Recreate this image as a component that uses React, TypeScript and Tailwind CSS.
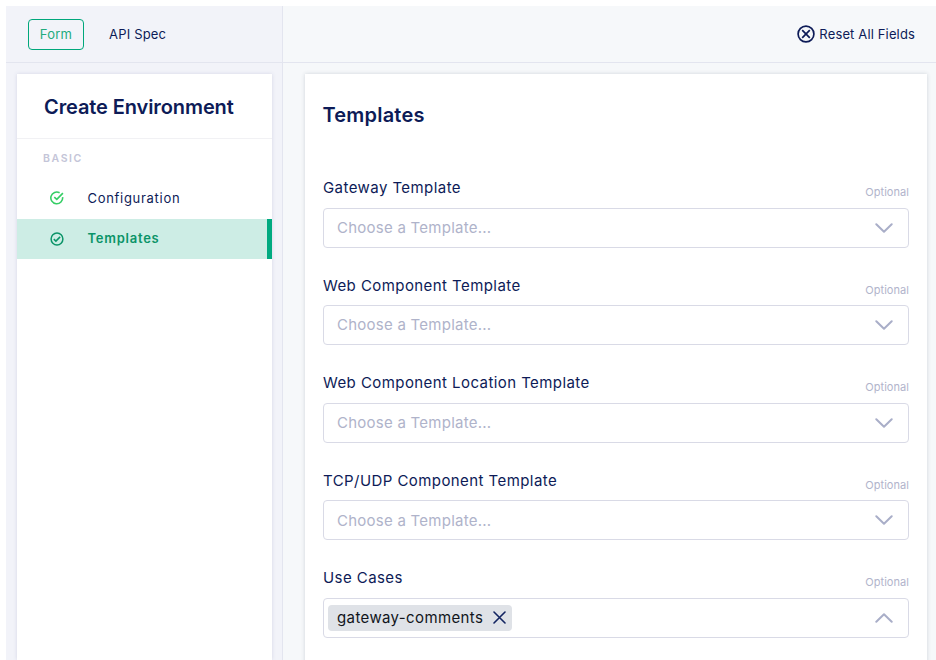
import React from "react";

const templateFields = [
  "Gateway Template",
  "Web Component Template",
  "Web Component Location Template",
  "TCP/UDP Component Template",
];

function Chevron({ up = false }: { up?: boolean }) {
  return (
    <svg width="18" height="10" viewBox="0 0 18 10" fill="none" stroke="#a9aec8" strokeWidth="2" strokeLinecap="round" strokeLinejoin="round">
      <path d={up ? "M1.3 8.7 9 1.3l7.7 7.4" : "M1.3 1.3 9 8.7l7.7-7.4"} />
    </svg>
  );
}

function Field({ label, up, children }: { label: string; up?: boolean; children: React.ReactNode }) {
  return (
    <div className="h-[97.6px] shrink-0">
      <div className="flex h-[31.5px] justify-between">
        <span className="text-[15px] leading-[24px] tracking-[0.43px]">{label}</span>
        <span className="pt-[7px] text-[11px] leading-[18px] tracking-[0.05px] text-[#b1b4cb]">Optional</span>
      </div>
      <div className="flex h-[40px] items-center justify-between rounded-[4px] border border-[#d9dae6] pr-[15px]">
        {children}
        <Chevron up={up} />
      </div>
    </div>
  );
}

export default function App() {
  return (
    <div className="flex h-[660px] w-[936px] overflow-hidden bg-white pl-1.5 pt-1.5 font-['Inter',sans-serif] text-[#0d1b57]">
      <aside className="flex w-[277px] shrink-0 flex-col border-r border-[#e3e5ef] bg-[#f2f3f9]">
        <div className="flex h-[57px] shrink-0 items-center border-b border-[#e3e5ef] pl-[22px] text-[13px]">
          <div className="flex h-[31px] w-[56px] items-center justify-center rounded-[4px] border border-[#00a77b] pt-px tracking-[0.3px] text-[#22ab7d]">Form</div>
          <div className="ml-[25px] pt-[2px] tracking-[0.18px]">API Spec</div>
        </div>
        <div className="ml-[11px] mt-[11px] w-[255px] flex-1 bg-white shadow-[0_0_4px_rgba(70,75,130,0.16)]">
          <h1 className="h-[65px] border-b border-[#f1f1f4] pl-[27px] pt-[19px] text-[20px] font-semibold leading-[28px] tracking-[-0.1px]">Create Environment</h1>
          <div className="h-[40px] pl-[26px] pt-[12px] text-[10.5px] font-semibold leading-[16px] tracking-[1.6px] text-[#c4c5d8]">BASIC</div>
          <div className="flex h-[39.5px] items-center pl-[32.5px] text-[13px] tracking-[0.7px]">
            <svg className="-mt-px" width="14" height="14" viewBox="0 0 14 14" fill="none" stroke="#35ce65" strokeWidth="1.6">
              <path d="M12.6 6.2A5.9 5.9 0 1 1 9.6 1.7M4.3 6.1l2.5 2.3 6.1-6.3" />
            </svg>
            <span className="ml-[24px]">Configuration</span>
          </div>
          <div className="flex h-[40px] items-center border-r-[5px] border-[#00aa80] bg-[#cdede5] pl-[32.5px] text-[13px] font-semibold tracking-[0.75px] text-[#0b9468]">
            <svg width="14" height="14" viewBox="0 0 14 14" fill="none" stroke="currentColor" strokeWidth="1.5">
              <circle cx="7" cy="7" r="5.9" />
              <path d="m3.8 7.1 2.1 2 4.2-4.2" />
            </svg>
            <span className="ml-[24px]">Templates</span>
          </div>
        </div>
      </aside>
      <main className="flex flex-1 flex-col bg-[#f6f8fa]">
        <div className="flex h-[57px] shrink-0 items-center justify-end border-b border-[#e3e5ef] pr-[21px] text-[13px]">
          <svg width="18" height="18" viewBox="0 0 18 18" fill="none" stroke="currentColor" strokeWidth="1.7">
            <circle cx="9" cy="9" r="7.9" />
            <path d="m5.2 5.2 7.6 7.6m0-7.6-7.6 7.6" />
          </svg>
          <span className="ml-1 pt-[2px] tracking-[0.14px]">Reset All Fields</span>
        </div>
        <section className="ml-[22px] mr-[9px] mt-[11px] flex flex-1 flex-col bg-white px-[18px] shadow-[0_0_4px_rgba(60,70,90,0.2)]">
          <h2 className="-ml-[0.5px] h-[102px] shrink-0 pt-[27px] text-[20px] font-semibold leading-[28px] tracking-[0.2px]">Templates</h2>
          <div className="h-0 flex-1">
            {templateFields.map((label) => (
              <Field key={label} label={label}>
                <span className="pl-[13px] pt-px text-[15px] tracking-[0.25px] text-[#afb3ca]">Choose a Template...</span>
              </Field>
            ))}
            <Field label="Use Cases" up>
              <div className="ml-1 flex h-[26px] w-[184px] items-center rounded-[4px] bg-[#dfe2e7] pl-[9px]">
                <span className="text-[15px] tracking-[0.38px] text-[#11151b]">gateway-comments</span>
                <svg className="ml-auto mr-[6.5px]" width="13" height="13" viewBox="0 0 13 13" stroke="#132461" strokeWidth="1.6" strokeLinecap="round">
                  <path d="m1 1 11 11M12 1 1 12" />
                </svg>
              </div>
            </Field>
          </div>
        </section>
      </main>
    </div>
  );
}
